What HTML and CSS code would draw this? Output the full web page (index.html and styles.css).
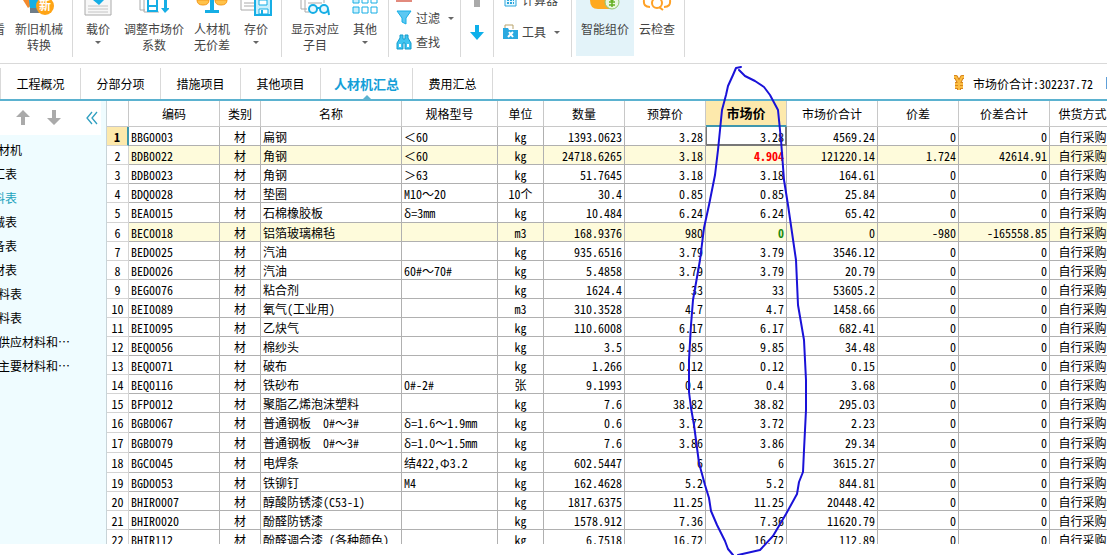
FILE: index.html
```html
<!DOCTYPE html>
<html lang="zh-CN">
<head>
<meta charset="utf-8">
<title>人材机汇总</title>
<link rel="stylesheet" href="styles.css">
</head>
<body>
<header class="toolbar">
  <div class="group g-convert">
    <button class="tool w-edge"><span class="icon"></span>查看</button>
    <button class="tool w-convert"><span class="icon"><svg width="32" height="16" viewBox="0 0 32 16"><path d="M0 0h6l3 5-4 3z" fill="#f58a2c"/><path d="M6 0h12v9H7z" fill="#16aee5"/><path d="M7 8h12v5H7z" fill="#6f7d88"/><circle cx="22" cy="6" r="9" fill="#ffa416"/><text x="22" y="10" text-anchor="middle" class="badge-text">新</text></svg></span>新旧机械<br>转换</button>
  </div>
  <div class="group g-price">
    <button class="tool w-load"><span class="icon"><svg width="28" height="16" viewBox="0 0 28 16"><path d="M1 0v15h26V0" fill="#f7f7f7" stroke="#aaa"/><path d="M4 6h20M4 9h20M4 12h20" stroke="#c4c4c4"/><path d="M9 0h11l-5 5z" fill="#16aee5"/></svg></span>载价<i class="caret"></i></button>
    <button class="tool w-adjust"><span class="icon"><svg width="30" height="16" viewBox="0 0 30 16"><path d="M1 0v10h5M5 0v12h15" fill="none" stroke="#aaa"/><path d="M9 0v11h9V0M9 6h9" fill="#fff" stroke="#16aee5" stroke-width="2"/><path d="M25 0h3v8h3l-5 5-4-5h3z" fill="#16aee5"/></svg></span>调整市场价<br>系数</button>
    <button class="tool w-nodiff"><span class="icon"><svg width="32" height="16" viewBox="0 0 32 16"><path d="M1 0h12q0 5-6 5T1 0zM19 0h12q0 5-6 5T19 0z" fill="#ffc24a" stroke="#f59a1b"/><path d="M14 0h4v10h5v3H9v-3h5z" fill="#16aee5"/></svg></span>人材机<br>无价差</button>
    <button class="tool w-save"><span class="icon"><svg width="32" height="16" viewBox="0 0 32 16"><path d="M1 0v10h15M4 3h10M4 6h10" fill="none" stroke="#aaa"/><path d="M15 0v15h16V0" fill="#c9effc" stroke="#16aee5" stroke-width="2"/><path d="M19 0h8v5h-8z" fill="#fff" stroke="#16aee5"/><path d="M19 9h9v5h-9z" fill="#fff" stroke="#16aee5"/><path d="M21 10h2v4h-2z" fill="#16aee5"/></svg></span>存价<i class="caret"></i></button>
  </div>
  <div class="group g-show">
    <button class="tool w-show"><span class="icon"><svg width="30" height="16" viewBox="0 0 30 16"><path d="M1 0v9h6M5 0v12h4M8 3h14M24 0v3" fill="none" stroke="#aaa"/><circle cx="13" cy="9" r="4" fill="#e8f9ff" stroke="#16aee5" stroke-width="2"/><circle cx="24" cy="9" r="4" fill="#e8f9ff" stroke="#16aee5" stroke-width="2"/><path d="M17 8h3M28 9l1 6" stroke="#16aee5" stroke-width="2"/></svg></span>显示对应<br>子目</button>
    <button class="tool w-other"><span class="icon"><svg width="26" height="16" viewBox="0 0 26 16"><g fill="#c9effc" stroke="#16aee5"><path d="M1 -3h6v6H1zM1 7h6v6H1z"/><path d="M10 -3h6v6h-6zM19 -3h6v6h-6zM10 7h6v6h-6zM19 7h6v6h-6z" fill="#fff"/></g></svg></span>其他<i class="caret"></i></button>
  </div>
  <div class="group g-find">
    <span class="stub"></span>
    <button class="line-tool"><svg width="16" height="16" viewBox="0 0 16 16"><path d="M1 1h14l-5 7v6l-4-2V8z" fill="#5cc8f2" stroke="#16aee5"/></svg>过滤<i class="caret beside"></i></button>
    <button class="line-tool"><svg width="16" height="16" viewBox="0 0 16 16"><path d="M4 1h3v4h2V1h3v3l3 5v6H9V9H7v6H1V9l3-5z" fill="#3fc4f0" stroke="#159ccc"/><path d="M3 10h2v3H3zM11 10h2v3h-2z" fill="#fff"/></svg>查找</button>
  </div>
  <div class="group g-move">
    <button class="arrow-tool" aria-label="上移"><svg width="14" height="8" viewBox="0 0 14 8"><path d="M4 0h6v7H4z" fill="#aaa"/></svg></button>
    <button class="arrow-tool" aria-label="下移"><svg width="14" height="16" viewBox="0 0 14 16"><path d="M5 0h4v7h5l-7 8-7-8h5z" fill="#0eb0ea"/></svg></button>
  </div>
  <div class="group g-tools">
    <button class="line-tool"><svg width="15" height="16" viewBox="0 0 15 16"><path d="M2 0h11v14H2z" fill="#e8f9ff" stroke="#2aa5dc"/><path d="M4 5h7M4 8h7M4 11h7" stroke="#2aa5dc" stroke-width="2" stroke-dasharray="2 1"/></svg>计算器</button>
    <button class="line-tool"><svg width="15" height="16" viewBox="0 0 15 16"><path d="M2 5V1h8v4" fill="#fff" stroke="#b9a36b"/><path d="M0 4h5l1 2h9v9H0z" fill="#2aa9e0"/><path d="M5 13l5-5M6 8l4 5" stroke="#fff" stroke-width="2"/></svg>工具<i class="caret beside"></i></button>
  </div>
  <div class="group g-smart">
    <button class="tool w-smart active"><span class="icon"><svg width="32" height="16" viewBox="0 0 32 16"><path d="M1 0q0 9 8 9h12V0z" fill="#ffa91f"/><circle cx="23" cy="2" r="7" fill="#e9f7df" stroke="#8fc46a"/><path d="M20 -2l3 3 3-3M23 1v6M20 2h6M20 5h6" stroke="#63b022" fill="none" stroke-width="1.5"/></svg></span>智能组价</button>
    <button class="tool w-cloud"><span class="icon"><svg width="32" height="16" viewBox="0 0 32 16"><path d="M3 0q-1 7 6 7M29 0q1 7-6 7" fill="none" stroke="#ffa126" stroke-width="2"/><circle cx="16" cy="3" r="5" fill="none" stroke="#ffa126" stroke-width="2"/><path d="M18 7l4 3" stroke="#ffa126" stroke-width="2"/></svg></span>云检查</button>
  </div>
</header>
<nav class="tabs">
  <button class="tab">工程概况</button>
  <button class="tab">分部分项</button>
  <button class="tab">措施项目</button>
  <button class="tab">其他项目</button>
  <button class="tab wide current">人材机汇总</button>
  <button class="tab">费用汇总</button>
  <p class="sum"><svg width="14" height="18" viewBox="0 0 14 18"><path d="M2 2l2 0 3 6 3-6 2 0M7 8v7M3 9h8M3 12h8" fill="none" stroke="#d8861c" stroke-width="4" stroke-linejoin="round"/><path d="M2 2l2 0 3 6 3-6 2 0M7 8v7M3 9h8M3 12h8" fill="none" stroke="#fbbd42" stroke-width="2" stroke-linejoin="round"/></svg><span>市场价合计:302237.72</span></p>
  <span class="sliver"></span>
</nav>
<main class="work">
  <aside class="side">
    <div class="side-bar">
      <button aria-label="上移"><svg width="14" height="16" viewBox="0 0 14 16"><path d="M7 0l7 7H9v8H5V7H0z" fill="#aaa"/></svg></button>
      <button aria-label="下移"><svg width="14" height="16" viewBox="0 0 14 16"><path d="M5 0h4v8h5l-7 7-7-7h5z" fill="#aaa"/></svg></button>
      <button class="fold" aria-label="收起"><svg width="12" height="14" viewBox="0 0 12 14"><path d="M6 1L1 7l5 6M11 1L6 7l5 6" fill="none" stroke="#2f9fc0" stroke-width="1.3"/></svg></button>
    </div>
    <ul class="list">
      <li>材机</li>
      <li class="cut">汇表</li>
      <li class="cut chosen">料表</li>
      <li class="cut">械表</li>
      <li class="cut">备表</li>
      <li class="cut">材表</li>
      <li>料表</li>
      <li>料表</li>
      <li>供应材料和⋯</li>
      <li>主要材料和⋯</li>
    </ul>
  </aside>
  <div class="grid">
    <table>
      <colgroup><col class="c-no"><col class="c-code"><col class="c-kind"><col class="c-name"><col class="c-spec"><col class="c-unit"><col class="c-num"><col class="c-num"><col class="c-num"><col class="c-sum"><col class="c-num"><col class="c-sum"><col class="c-way"></colgroup>
      <thead><tr><th><th>编码<th>类别<th>名称<th>规格型号<th>单位<th>数量<th>预算价<th class="picked">市场价<th>市场价合计<th>价差<th>价差合计<th>供货方式</tr></thead>
      <tbody>
      <tr class="first"><th>1<td>BBG0003<td>材<td>扁钢<td>＜60<td>kg<td>1393.0623<td>3.28<td class="focus">3.28<td>4569.24<td>0<td>0<td>自行采购</tr>
      <tr class="mark"><th>2<td>BDB0022<td>材<td>角钢<td>＜60<td>kg<td>24718.6265<td>3.18<td class="up">4.904<td>121220.14<td>1.724<td>42614.91<td>自行采购</tr>
      <tr><th>3<td>BDB0023<td>材<td>角钢<td>＞63<td>kg<td>51.7645<td>3.18<td>3.18<td>164.61<td>0<td>0<td>自行采购</tr>
      <tr><th>4<td>BDQ0028<td>材<td>垫圈<td>M10～20<td>10个<td>30.4<td>0.85<td>0.85<td>25.84<td>0<td>0<td>自行采购</tr>
      <tr class="tall"><th>5<td>BEA0015<td>材<td>石棉橡胶板<td>δ=3mm<td>kg<td>10.484<td>6.24<td>6.24<td>65.42<td>0<td>0<td>自行采购</tr>
      <tr class="mark"><th>6<td>BEC0018<td>材<td>铝箔玻璃棉毡<td><td>m3<td>168.9376<td>980<td class="down">0<td>0<td>-980<td>-165558.85<td>自行采购</tr>
      <tr><th>7<td>BED0025<td>材<td>汽油<td><td>kg<td>935.6516<td>3.79<td>3.79<td>3546.12<td>0<td>0<td>自行采购</tr>
      <tr><th>8<td>BED0026<td>材<td>汽油<td>60#～70#<td>kg<td>5.4858<td>3.79<td>3.79<td>20.79<td>0<td>0<td>自行采购</tr>
      <tr><th>9<td>BEG0076<td>材<td>粘合剂<td><td>kg<td>1624.4<td>33<td>33<td>53605.2<td>0<td>0<td>自行采购</tr>
      <tr><th>10<td>BEI0089<td>材<td>氧气(工业用)<td><td>m3<td>310.3528<td>4.7<td>4.7<td>1458.66<td>0<td>0<td>自行采购</tr>
      <tr><th>11<td>BEI0095<td>材<td>乙炔气<td><td>kg<td>110.6008<td>6.17<td>6.17<td>682.41<td>0<td>0<td>自行采购</tr>
      <tr><th>12<td>BEQ0056<td>材<td>棉纱头<td><td>kg<td>3.5<td>9.85<td>9.85<td>34.48<td>0<td>0<td>自行采购</tr>
      <tr><th>13<td>BEQ0071<td>材<td>破布<td><td>kg<td>1.266<td>0.12<td>0.12<td>0.15<td>0<td>0<td>自行采购</tr>
      <tr><th>14<td>BEQ0116<td>材<td>铁砂布<td>0#-2#<td>张<td>9.1993<td>0.4<td>0.4<td>3.68<td>0<td>0<td>自行采购</tr>
      <tr><th>15<td>BFP0012<td>材<td>聚脂乙烯泡沫塑料<td><td>kg<td>7.6<td>38.82<td>38.82<td>295.03<td>0<td>0<td>自行采购</tr>
      <tr class="tall"><th>16<td>BGB0067<td>材<td>普通钢板　0#～3#<td>δ=1.6～1.9mm<td>kg<td>0.6<td>3.72<td>3.72<td>2.23<td>0<td>0<td>自行采购</tr>
      <tr class="tall"><th>17<td>BGB0079<td>材<td>普通钢板　0#～3#<td>δ=1.0～1.5mm<td>kg<td>7.6<td>3.86<td>3.86<td>29.34<td>0<td>0<td>自行采购</tr>
      <tr class="tall"><th>18<td>BGC0045<td>材<td>电焊条<td>结422,Φ3.2<td>kg<td>602.5447<td>6<td>6<td>3615.27<td>0<td>0<td>自行采购</tr>
      <tr><th>19<td>BGD0053<td>材<td>铁铆钉<td>M4<td>kg<td>162.4628<td>5.2<td>5.2<td>844.81<td>0<td>0<td>自行采购</tr>
      <tr><th>20<td>BHIR0007<td>材<td>醇酸防锈漆(C53-1)<td><td>kg<td>1817.6375<td>11.25<td>11.25<td>20448.42<td>0<td>0<td>自行采购</tr>
      <tr><th>21<td>BHIR0020<td>材<td>酚醛防锈漆<td><td>kg<td>1578.912<td>7.36<td>7.36<td>11620.79<td>0<td>0<td>自行采购</tr>
      <tr><th>22<td>BHIR112<td>材<td>酚醛调合漆 (各种颜色)<td><td>kg<td>6.7518<td>16.72<td>16.72<td>112.89<td>0<td>0<td>自行采购</tr>
      </tbody>
    </table>
  </div>
</main>
<svg class="ink" width="1107" height="555" viewBox="0 0 1107 555"><path d="M741 67L736 68L733 75L728 86L726 95L722 110L720 130L718 150L715 175L709 205L704 228L700 260L693 300L691 325L689 360L689 392L691 408L694 425L699 463L705 485L709 498L711 511L717 525L725 541L728 549L733 555M738 555L760 550L773 536L786 514L797 494L799 482L803 472L804 450L806 410L806 380L804 340L798 305L796 260L788 205L784 180L781 140L778 110L770 95L764 87L755 81L745 76L739 70"/></svg>
</body>
</html>
```
FILE: styles.css
```css
* { box-sizing: border-box; }
body {
  margin: 0;
  height: 100vh;
  padding-bottom: 11px;
  display: flex;
  flex-direction: column;
  overflow: hidden;
  position: relative;
  background: #fff;
  color: #000;
  font: 12px/16px "Noto Sans Mono CJK SC", "Noto Sans CJK SC", sans-serif;
}
button {
  border: 0;
  padding: 0;
  background: none;
  color: inherit;
  font: inherit;
  white-space: nowrap;
}
svg { display: block; flex: none; }

/* toolbar */
.toolbar {
  flex: none;
  display: flex;
  height: 64px;
  border-bottom: 1px solid #d9d9d9;
  color: #444;
  font-family: "Noto Sans CJK SC", sans-serif;
}
.group {
  flex: none;
  display: flex;
  height: 57px;
  border-right: 1px solid #d9d9d9;
}
.g-convert { width: 73px; }
.g-price { width: 209px; }
.g-show { width: 107px; }
.tool {
  flex: none;
  display: flex;
  flex-direction: column;
  align-items: center;
}
.icon { height: 21px; }
.w-edge { width: 5px; align-items: flex-end; }
.w-convert { width: 68px; }
.w-load { width: 50px; }
.w-adjust { width: 62px; }
.w-nodiff { width: 54px; }
.w-save { width: 34px; }
.w-show { width: 66px; }
.w-other { width: 34px; }
.w-smart { width: 58px; height: 56px; }
.w-cloud { width: 46px; }
.active { background: #e3f3f9; }
.badge-text { font: bold 12px "Noto Sans CJK SC", sans-serif; fill: #fff; }
.caret {
  flex: none;
  margin-top: 4px;
  border: 3px solid transparent;
  border-top-color: #666;
  border-bottom: 0;
}
.caret.beside { margin: 0 0 0 4px; }
.g-find, .g-tools, .g-move { flex-direction: column; }
.g-find { width: 72px; padding-left: 7px; gap: 8px; }
.stub { width: 16px; height: 2px; background: #e28a7d; }
.line-tool { display: flex; align-items: center; gap: 4px; }
.g-move { width: 33px; align-items: center; gap: 17px; }
.g-tools { width: 78px; padding-left: 9px; gap: 16px; }
.g-tools .line-tool:first-child { margin-top: -8px; }
.g-smart { width: 113px; padding-left: 4px; }

/* tabs */
.tabs {
  flex: none;
  display: flex;
  height: 37px;
  padding-top: 4px;
  border-bottom: 2px solid #5bb2d0;
}
.tab {
  flex: none;
  width: 80px;
  border-right: 1px solid #d9d9d9;
}
.tab:first-child { width: 81px; border-left: 1px solid #d9d9d9; }
.tab.wide { width: 92px; }
.current {
  position: relative;
  color: #159fd8;
  font-size: 13px;
  font-weight: bold;
}
.current::after {
  content: "";
  position: absolute;
  left: 50%;
  bottom: 0;
  margin-left: -4px;
  border: 4px solid transparent;
  border-top: 0;
  border-bottom-color: #5bb2d0;
}
.sum {
  display: flex;
  align-items: center;
  gap: 7px;
  margin: 0 13px 0 auto;
}
.sliver { width: 1px; height: 12px; margin-top: 9px; background: #5f9fd8; }

/* work area */
.work { flex: 1; min-height: 0; display: flex; }
.side {
  flex: none;
  width: 107px;
  background: #effcff;
  border-right: 1px solid #c8d4d8;
  overflow: hidden;
}
.side-bar {
  display: flex;
  align-items: center;
  gap: 17px;
  height: 34px;
  margin-right: 5px;
  padding-left: 16px;
  background: #fff;
}
.fold { margin-left: 8px; }
.list {
  margin: 0;
  padding: 3px 0 0;
  list-style: none;
  line-height: 24px;
  white-space: nowrap;
}
.list li { margin-left: -2px; }
.list .cut { margin-left: -7px; }
.list .chosen { color: #1aa3bd; }

/* price grid */
.grid { flex: 1; min-width: 0; overflow: hidden; }
table {
  width: 1009px;
  table-layout: fixed;
  border-collapse: separate;
  border-spacing: 0;
}
.c-no { width: 22px; }
.c-code { width: 91px; }
.c-kind { width: 41px; }
.c-name { width: 141px; }
.c-spec { width: 96px; }
.c-unit { width: 46px; }
.c-num { width: 81px; }
.c-sum { width: 91px; }
.c-way { width: 66px; }
th, td {
  height: 19px;
  padding: 1px 2px 0;
  border-right: 1px solid #b0b0b0;
  border-bottom: 1px solid #b0b0b0;
  font-weight: normal;
  line-height: 16px;
  text-align: right;
  white-space: nowrap;
}
th, td:nth-child(3), td:nth-child(6), td:nth-child(13) { text-align: center; }
td:nth-child(2), td:nth-child(4), td:nth-child(5) { text-align: left; }
thead th { height: 26px; padding-top: 0; border-color: #c8c8c8; }
tbody th { padding: 1px 0 0; border-color: #d4d4d4; }
.tall > * { height: 20px; }
.mark td { background: #fefbdb; }
.picked {
  background: #fde9ac;
  border-bottom: 2px solid #3f97ad;
  font-size: 13px;
  font-weight: bold;
}
.first th {
  background: #fde9ac;
  border-right: 2px solid #3f97ad;
  font-weight: bold;
}
.focus { box-shadow: inset 1px 0 #777, inset -1px -1px #777; border-color: #777; }
.up { color: #f00; font-weight: bold; }
.down { color: #1c8c10; font-weight: bold; }

/* freehand pen mark over the grid */
.ink { position: absolute; top: 0; left: 0; pointer-events: none; }
.ink path { fill: none; stroke: #1a12d8; stroke-width: 2; stroke-linejoin: round; stroke-linecap: round; }
```
